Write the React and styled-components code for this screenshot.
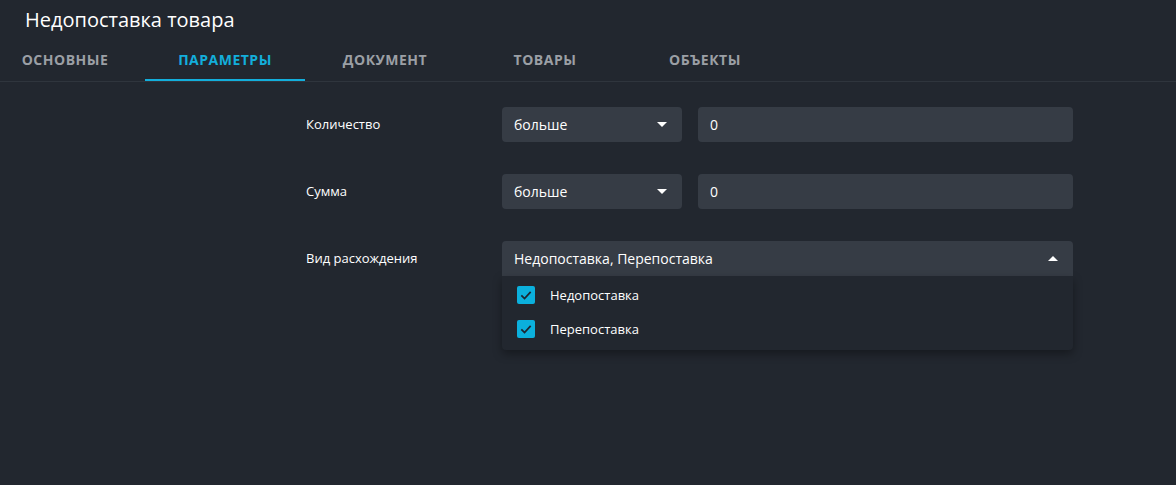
import React, { useState } from 'react';
import styled, { createGlobalStyle } from 'styled-components';

const GlobalStyle = createGlobalStyle`
  html, body {
    margin: 0;
    padding: 0;
    background-color: #22272f;
    font-family: "Open Sans", "Noto Sans", sans-serif;
  }
`;

const Page = styled.div`
  height: 485px;
  background-color: #22272f;
  color: #ffffff;
  overflow: hidden;
`;

const Title = styled.h1`
  margin: 0;
  padding: 7px 0 0 25px;
  height: 31px;
  font-size: 20px;
  font-weight: 400;
  line-height: 26px;
  color: #ffffff;
`;

const TabBar = styled.div`
  display: flex;
  height: 44px;
  margin-left: -15px;
  border-bottom: 1px solid #2f353d;
  box-sizing: border-box;
`;

const Tab = styled.div`
  width: 160px;
  display: flex;
  align-items: center;
  justify-content: center;
  font-size: 14px;
  font-weight: 700;
  letter-spacing: 0.5px;
  text-transform: uppercase;
  color: ${(p) => (p.active ? '#13aedb' : '#9b9fa5')};
  border-bottom: 2px solid ${(p) => (p.active ? '#13aedb' : 'transparent')};
  box-sizing: border-box;
  padding-top: 1px;
`;

const Form = styled.div`
  display: flex;
  flex-direction: column;
  gap: 32px;
  padding: 25px 0 0 306px;
  width: 767px;
`;

const Row = styled.div`
  display: grid;
  grid-template-columns: 180px 180px 375px;
  column-gap: 16px;
  align-items: start;
`;

const Label = styled.div`
  font-size: 13px;
  line-height: 35px;
  color: #ffffff;
`;

const Field = styled.div`
  position: relative;
  grid-column: ${(p) => (p.wide ? '2 / 4' : 'auto')};
`;

const Box = styled.div`
  height: 35px;
  display: flex;
  align-items: center;
  justify-content: space-between;
  padding: 0 12px 0 12px;
  background-color: #363c45;
  border-radius: ${(p) => (p.open ? '4px 4px 0 0' : '4px')};
  font-size: 14px;
  color: #ffffff;
  box-sizing: border-box;
`;

const Caret = styled.svg`
  width: 10px;
  height: 5px;
  margin-right: 3px;
  transform: ${(p) => (p.up ? 'rotate(180deg)' : 'none')};
`;

const Menu = styled.div`
  position: absolute;
  left: 0;
  right: 0;
  top: 35px;
  padding: 2px 0 4px;
  background-color: #22272f;
  border-radius: 0 0 4px 4px;
  box-shadow: 0 4px 10px rgba(0, 0, 0, 0.35);
  z-index: 2;
`;

const Option = styled.div`
  height: 34px;
  display: flex;
  align-items: center;
  gap: 15px;
  padding-left: 15px;
  font-size: 13px;
  color: #ffffff;
`;

const Check = styled.span`
  width: 18px;
  height: 18px;
  border-radius: 2px;
  background-color: #0bb0dd;
  display: flex;
  align-items: center;
  justify-content: center;
`;

const Arrow = ({ up }) => (
  <Caret up={up} viewBox="0 0 10 5">
    <path d="M0 0 L10 0 L5 5 Z" fill="#ffffff" />
  </Caret>
);

const CheckMark = () => (
  <svg width="14" height="14" viewBox="0 0 24 24">
    <path d="M4 12.5 L9.5 18 L20 6.5" fill="none" stroke="#1d2530" strokeWidth="3" />
  </svg>
);

const tabs = ['Основные', 'Параметры', 'Документ', 'Товары', 'Объекты'];
const kinds = ['Недопоставка', 'Перепоставка'];

const App = () => {
  const [active] = useState(1);

  return (
    <Page>
      <GlobalStyle />
      <Title>Недопоставка товара</Title>
      <TabBar>
        {tabs.map((t, i) => (
          <Tab key={t} active={i === active}>{t}</Tab>
        ))}
      </TabBar>
      <Form>
        <Row>
          <Label>Количество</Label>
          <Field>
            <Box>больше<Arrow /></Box>
          </Field>
          <Field>
            <Box>0</Box>
          </Field>
        </Row>
        <Row>
          <Label>Сумма</Label>
          <Field>
            <Box>больше<Arrow /></Box>
          </Field>
          <Field>
            <Box>0</Box>
          </Field>
        </Row>
        <Row>
          <Label>Вид расхождения</Label>
          <Field wide>
            <Box open>{kinds.join(', ')}<Arrow up /></Box>
            <Menu>
              {kinds.map((k) => (
                <Option key={k}>
                  <Check><CheckMark /></Check>
                  {k}
                </Option>
              ))}
            </Menu>
          </Field>
        </Row>
      </Form>
    </Page>
  );
};

export default App;
